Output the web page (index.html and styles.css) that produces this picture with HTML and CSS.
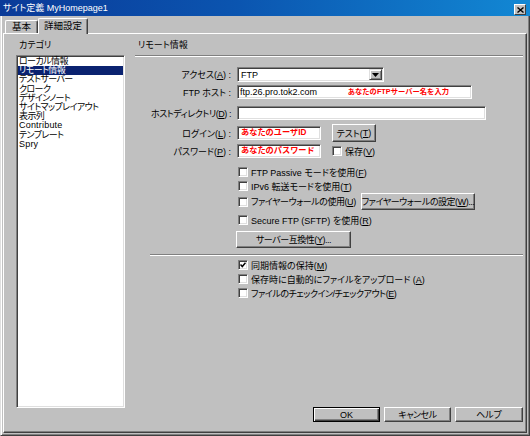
FILE: index.html
```html
<!DOCTYPE html>
<html lang="ja">
<head>
<meta charset="utf-8">
<title>サイト定義</title>
<link rel="stylesheet" href="styles.css">
</head>
<body>
<div class="window">
  <div class="titlebar">
    <span class="title">サイト定義 MyHomepage1</span>
    <span class="close"><svg width="7" height="6" viewBox="0 0 7 6"><path d="M0.5 0.5 L6.5 5.5 M6.5 0.5 L0.5 5.5" stroke="#000" stroke-width="1.4"/></svg></span>
  </div>
  <div class="frame">
    <div class="tabs">
      <div class="tab">基本</div>
      <div class="tab active">詳細設定</div>
    </div>
    <div class="panel">
      <div class="cat-col">
        <div class="cat-label">カテゴリ</div>
        <div class="listbox">
          <div class="item">ローカル情報</div>
          <div class="item sel">リモート情報</div>
          <div class="item">テストサーバー</div>
          <div class="item">クローク</div>
          <div class="item">デザインノート</div>
          <div class="item">サイトマップレイアウト</div>
          <div class="item">表示列</div>
          <div class="item latin">Contribute</div>
          <div class="item">テンプレート</div>
          <div class="item latin">Spry</div>
        </div>
      </div>
      <div class="main-col">
        <div class="section-title">リモート情報</div>
        <div class="sep"></div>
        <div class="form">
          <div class="frow r-access">
            <div class="flabel">アクセス(<u>A</u>) :</div>
            <div class="select"><span class="sel-text">FTP</span><span class="drop"><svg width="7" height="4" viewBox="0 0 7 4"><path d="M0 0 H7 L3.5 4 Z" fill="#000"/></svg></span></div>
          </div>
          <div class="frow r-host">
            <div class="flabel">FTP ホスト :</div>
            <div class="input w-host"><span>ftp.26.pro.tok2.com</span><span class="note note-host">あなたのFTPサーバー名を入力</span></div>
          </div>
          <div class="frow r-dir">
            <div class="flabel tight">ホストディレクトリ(<u>D</u>) :</div>
            <div class="input w-dir"></div>
          </div>
          <div class="frow r-login">
            <div class="flabel">ログイン(<u>L</u>) :</div>
            <div class="input w-short"><span class="note">あなたのユーザID</span></div>
            <div class="btn btn-test">テスト(<u>T</u>)</div>
          </div>
          <div class="frow r-pass">
            <div class="flabel">パスワード(<u>P</u>) :</div>
            <div class="input w-short"><span class="note">あなたのパスワード</span></div>
            <span class="cb cb-save"></span><span class="cb-text">保存(<u>V</u>)</span>
          </div>
        </div>
        <div class="checks">
          <div class="crow"><span class="cb"></span><span class="cb-text">FTP Passive モードを使用(<u>F</u>)</span></div>
          <div class="crow"><span class="cb"></span><span class="cb-text">IPv6 転送モードを使用(<u>T</u>)</span></div>
          <div class="crow crow-fw"><span class="cb"></span><span class="cb-text tight">ファイヤーウォールの使用(<u>U</u>)</span><div class="btn btn-fw tight">ファイヤーウォールの設定(<u>W</u>)...</div></div>
          <div class="crow crow-sftp"><span class="cb"></span><span class="cb-text">Secure FTP (SFTP) を使用(<u>R</u>)</span></div>
          <div class="btn btn-compat tight">サーバー互換性(<u>Y</u>)...</div>
        </div>
        <div class="sep sep2"></div>
        <div class="checks checks2">
          <div class="crow"><span class="cb checked"><svg width="6" height="6" viewBox="0 0 6 6"><path d="M0.5 2.5 L2.3 4.5 L5.5 0.8" fill="none" stroke="#000" stroke-width="1.5"/></svg></span><span class="cb-text">同期情報の保持(<u>M</u>)</span></div>
          <div class="crow"><span class="cb"></span><span class="cb-text">保存時に自動的にファイルをアップロード (<u>A</u>)</span></div>
          <div class="crow"><span class="cb"></span><span class="cb-text tight">ファイルのチェックイン/チェックアウト(<u>E</u>)</span></div>
        </div>
        <div class="buttons">
          <div class="btn btn-main default">OK</div>
          <div class="btn btn-main tight">キャンセル</div>
          <div class="btn btn-main btn-help">ヘルプ</div>
        </div>
      </div>
    </div>
  </div>
</div>
</body>
</html>
```

FILE: styles.css
```css
html, body {
  margin: 0;
  padding: 0;
  background: #c0c0c0;
}
body {
  font-family: "Liberation Sans", "Noto Sans CJK JP", sans-serif;
  font-size: 9px;
  font-feature-settings: "palt";
  color: #000;
}
u { text-decoration: underline; text-underline-offset: 1px; }
.tight { letter-spacing: -0.45px; }

.window {
  width: 530px;
  height: 436px;
  display: flex;
  flex-direction: column;
  overflow: hidden;
}

.titlebar {
  height: 16px;
  flex: none;
  display: flex;
  justify-content: space-between;
  align-items: center;
  padding: 0 4px 0 3px;
  background: linear-gradient(90deg, #0a3a98 0%, #0b55b0 45%, #1288d4 100%);
  color: #fff;
}
.title { line-height: 16px; }
.close {
  align-self: flex-end;
  margin-bottom: 1px;
  width: 12px;
  height: 11px;
  box-sizing: border-box;
  background: #c0c0c0;
  border-top: 1px solid #fff;
  border-left: 1px solid #fff;
  border-right: 1px solid #404040;
  border-bottom: 1px solid #404040;
  display: flex;
  align-items: center;
  justify-content: center;
}
.close svg { display: block; }

.frame {
  flex: 1;
  display: flex;
  flex-direction: column;
  border-left: 1px solid #dfdfdf;
  border-right: 1px solid #404040;
  border-bottom: 1px solid #404040;
  box-shadow: inset 1px 0 #fff, inset -1px -1px #808080;
  padding: 2px;
  min-height: 0;
}

.tabs {
  height: 15px;
  flex: none;
  display: flex;
  align-items: flex-end;
  padding-left: 2px;
  position: relative;
  z-index: 1;
}
.tab {
  height: 13px;
  width: 33px;
  box-sizing: border-box;
  border-top: 1px solid #fff;
  border-left: 1px solid #fff;
  border-right: 1px solid #404040;
  box-shadow: inset -1px 0 #808080;
  border-radius: 2px 2px 0 0;
  background: #c0c0c0;
  line-height: 12px;
  text-align: center;
  font-size: 9.5px;
}
.tab.active {
  width: 50px;
  height: 16px;
  margin-bottom: -1px;
  line-height: 14px;
}

.panel {
  flex: 1;
  display: flex;
  border-top: 1px solid #fff;
  border-left: 1px solid #fff;
  border-right: 1px solid #404040;
  border-bottom: 1px solid #404040;
  box-shadow: inset -1px -1px #808080;
  min-height: 0;
}

.cat-col {
  width: 109px;
  flex: none;
  margin-left: 12px;
  padding-top: 6px;
}
.cat-label {
  height: 11px;
  line-height: 11px;
  padding-left: 3px;
}
.listbox {
  margin-top: 4px;
  height: 353px;
  box-sizing: border-box;
  background: #fff;
  border-top: 1px solid #808080;
  border-left: 1px solid #808080;
  border-right: 1px solid #fff;
  border-bottom: 1px solid #fff;
  box-shadow: inset 1px 1px #404040, inset -1px -1px #dfdfdf;
  padding: 1px 1px 0 1px;
}
.item {
  height: 9.2px;
  line-height: 9.2px;
  padding-left: 1px;
  white-space: nowrap;
  letter-spacing: -0.6px;
}
.item.latin { letter-spacing: 0.2px; }
.item.sel {
  background: #0a2270;
  color: #fff;
}

.main-col {
  flex: 1;
  display: flex;
  flex-direction: column;
  margin-left: 10px;
  margin-right: 3px;
  min-width: 0;
}
.section-title {
  padding-top: 6px;
  height: 11px;
  line-height: 11px;
  padding-left: 3px;
}
.sep {
  margin-top: 4px;
  height: 0;
  border-top: 1px solid #808080;
  border-bottom: 1px solid #fff;
}

.form {
  margin-top: 10px;
  display: flex;
  flex-direction: column;
}
.frow {
  display: flex;
  align-items: center;
}
.flabel {
  width: 96px;
  margin-right: 6px;
  text-align: right;
  white-space: nowrap;
}
.r-access { height: 15px; }
.r-host { height: 14px; margin-top: 3px; }
.r-dir { height: 14px; margin-top: 7px; }
.r-login { height: 18px; margin-top: 4px; }
.r-pass { height: 14px; margin-top: 2px; }

.input, .select {
  height: 14px;
  box-sizing: border-box;
  background: #fff;
  border-top: 1px solid #808080;
  border-left: 1px solid #808080;
  border-right: 1px solid #fff;
  border-bottom: 1px solid #fff;
  box-shadow: inset 1px 1px #404040, inset -1px -1px #dfdfdf;
  display: flex;
  align-items: center;
  padding-left: 2px;
  white-space: nowrap;
  overflow: hidden;
}
.select {
  width: 147px;
  height: 15px;
  justify-content: space-between;
  padding-right: 1px;
}
.sel-text { padding-left: 1px; }
.drop {
  width: 13px;
  height: 11px;
  box-sizing: border-box;
  background: #c0c0c0;
  border-top: 1px solid #dfdfdf;
  border-left: 1px solid #dfdfdf;
  border-right: 1px solid #404040;
  border-bottom: 1px solid #404040;
  box-shadow: inset 1px 1px #fff, inset -1px -1px #808080;
  display: flex;
  align-items: center;
  justify-content: center;
}
.drop svg { display: block; }
.w-host { width: 235px; }
.w-dir { width: 249px; }
.w-short { width: 84px; }

.note {
  color: #ff0000;
  font-weight: bold;
  font-size: 8.2px;
  font-feature-settings: normal;
  line-height: 10px;
  padding-left: 1px;
}
.note-host {
  font-size: 7.3px;
  margin-left: auto;
  margin-right: 22px;
}

.btn {
  box-sizing: border-box;
  background: #c0c0c0;
  border-top: 1px solid #fff;
  border-left: 1px solid #fff;
  border-right: 1px solid #404040;
  border-bottom: 1px solid #404040;
  box-shadow: inset -1px -1px #808080;
  display: flex;
  align-items: center;
  justify-content: center;
  white-space: nowrap;
}
.btn-test {
  width: 44px;
  height: 18px;
  margin-left: 11px;
}

.cb {
  width: 10px;
  height: 10px;
  flex: none;
  box-sizing: border-box;
  background: #fff;
  border-top: 1px solid #808080;
  border-left: 1px solid #808080;
  border-right: 1px solid #fff;
  border-bottom: 1px solid #fff;
  box-shadow: inset 1px 1px #404040, inset -1px -1px #dfdfdf;
  display: flex;
  align-items: center;
  justify-content: center;
}
.cb svg { display: block; }
.cb-text {
  margin-left: 3px;
  white-space: nowrap;
}
.cb-save { margin-left: 11px; }

.checks {
  margin-top: 7px;
  margin-left: 103px;
  display: flex;
  flex-direction: column;
  align-items: flex-start;
}
.crow {
  height: 14px;
  display: flex;
  align-items: center;
}
.crow-fw {
  height: 17px;
  width: 237px;
}
.crow-sftp { margin-top: 3px; }
.btn-fw {
  width: 114px;
  height: 17px;
  margin-left: auto;
}
.btn-compat {
  width: 115px;
  height: 17px;
  margin-top: 4px;
  margin-left: -2px;
}
.sep2 {
  margin-top: 6px;
  margin-left: 15px;
}
.checks2 { margin-top: 2px; }

.buttons {
  margin-top: auto;
  margin-bottom: 10px;
  display: flex;
  justify-content: flex-end;
  gap: 4px;
}
.btn-main {
  width: 67px;
  height: 15px;
}
.btn-help { width: 68px; }
.btn.default {
  border: 1px solid #000;
  box-shadow: inset 1px 1px #fff, inset -1px -1px #404040, inset -2px -2px #808080;
}
```
